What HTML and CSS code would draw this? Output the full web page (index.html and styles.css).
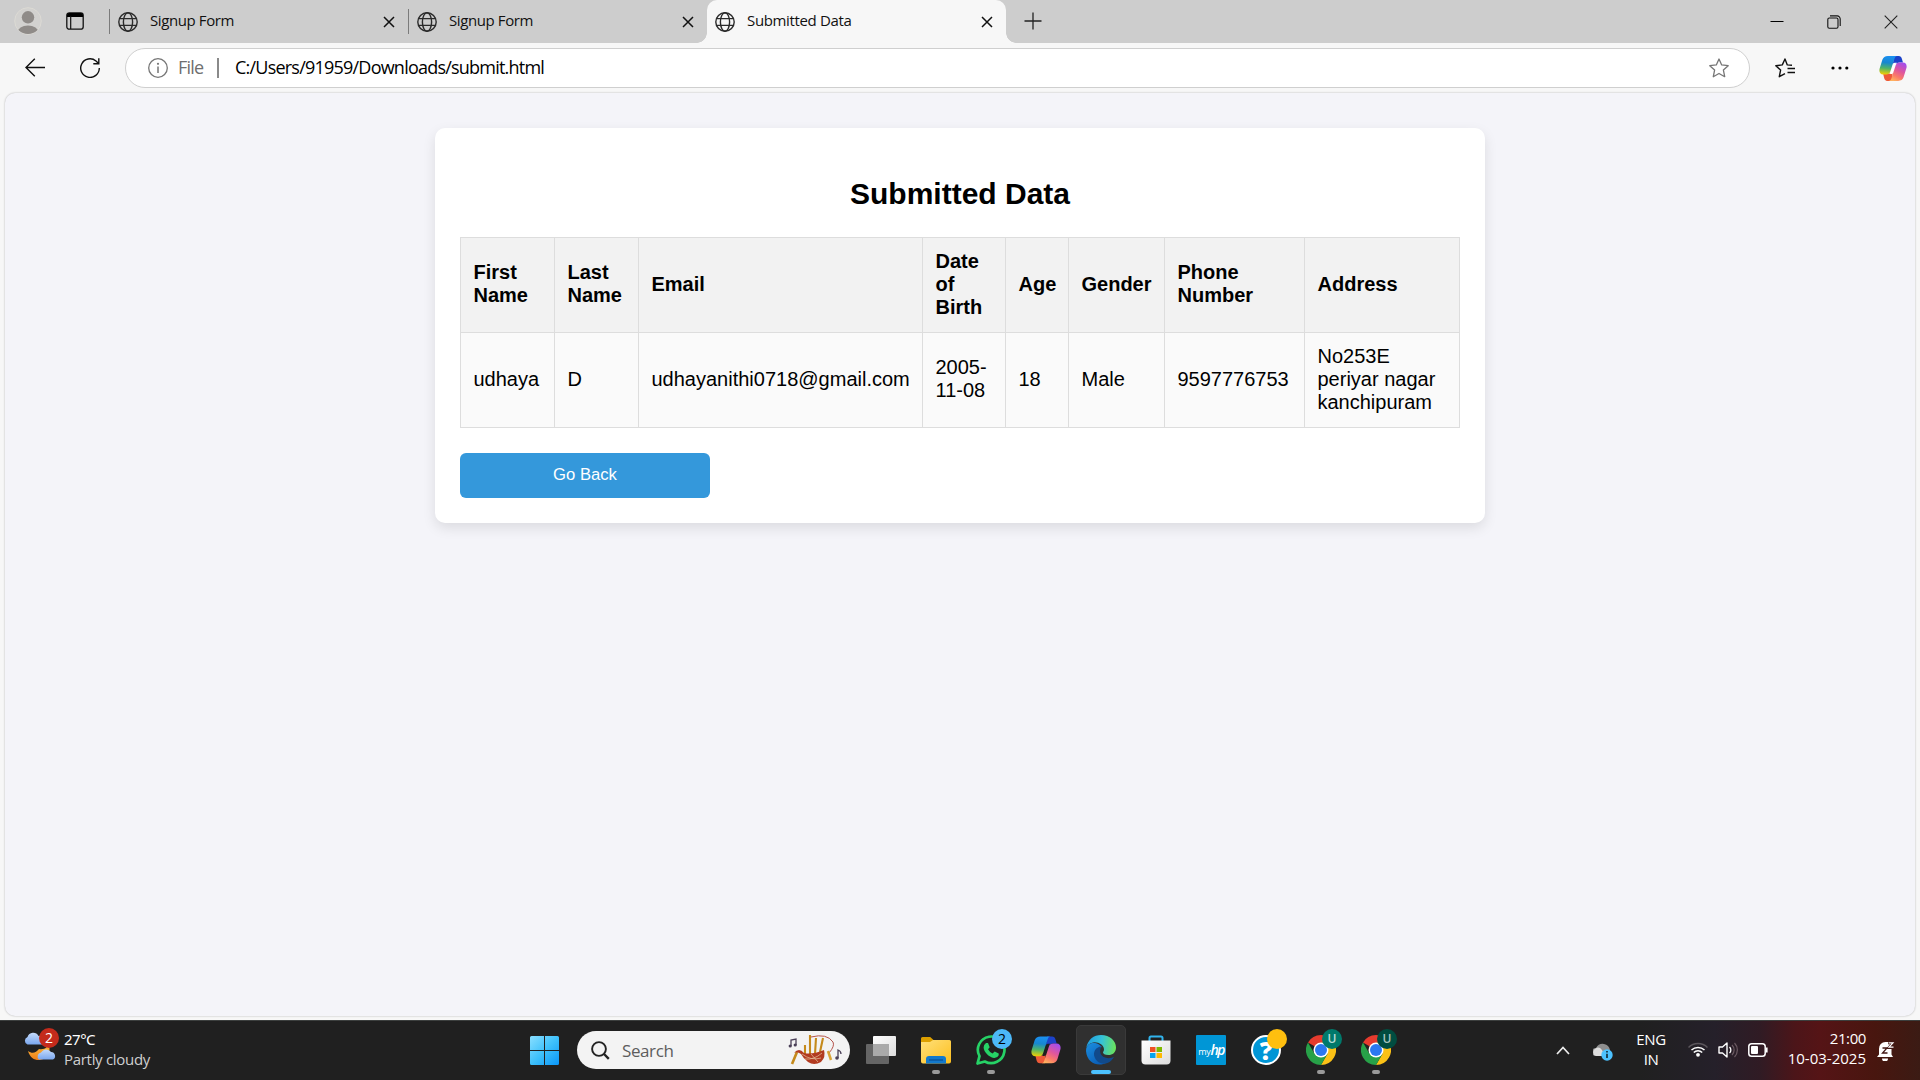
FILE: index.html
```html
<!DOCTYPE html>
<html lang="en">
<head>
<meta charset="utf-8">
<title>Submitted Data</title>
<link rel="stylesheet" href="styles.css">
</head>
<body>
<svg class="defs" width="0" height="0">
  <defs>
    <linearGradient id="cpA" x1="0.3" y1="0" x2="0.2" y2="1"><stop offset="0" stop-color="#1a8ff0"/><stop offset=".35" stop-color="#1787d0"/><stop offset=".65" stop-color="#4db36a"/><stop offset="1" stop-color="#f5d000"/></linearGradient>
    <linearGradient id="cpB" x1="0.8" y1="0" x2="0.3" y2="1"><stop offset="0" stop-color="#a04df0"/><stop offset=".45" stop-color="#e0569c"/><stop offset=".75" stop-color="#fb7a68"/><stop offset="1" stop-color="#ffb15e"/></linearGradient>
    <linearGradient id="edA" x1="0" y1="0.4" x2="1" y2="0.5"><stop offset="0" stop-color="#1f9de0"/><stop offset=".5" stop-color="#35c1d8"/><stop offset="1" stop-color="#6be35a"/></linearGradient>
    <linearGradient id="edB" x1="0" y1="0" x2="0.7" y2="1"><stop offset="0" stop-color="#1b8fe0"/><stop offset="1" stop-color="#0a5cb5"/></linearGradient>
    <linearGradient id="win" x1="0" y1="0" x2="1" y2="1"><stop offset="0" stop-color="#8adfff"/><stop offset=".5" stop-color="#3fc1fb"/><stop offset="1" stop-color="#0a96f8"/></linearGradient>
    <linearGradient id="fold" x1="0" y1="0" x2="1" y2="1"><stop offset="0" stop-color="#ffe07a"/><stop offset="1" stop-color="#fdbf1e"/></linearGradient>
    <linearGradient id="cld" x1="0" y1="0" x2="0" y2="1"><stop offset="0" stop-color="#c3dafb"/><stop offset="1" stop-color="#7aa7ee"/></linearGradient>
    <linearGradient id="moon" x1="0" y1="0" x2="0" y2="1"><stop offset="0" stop-color="#ffc23e"/><stop offset="1" stop-color="#ec7d18"/></linearGradient>
    <linearGradient id="tv" x1="0" y1="0" x2="1" y2="1"><stop offset="0" stop-color="#fff"/><stop offset="1" stop-color="#dcdcdc"/></linearGradient>
    <symbol id="globe" viewBox="0 0 20 20"><g fill="none" stroke="#2b2b2b" stroke-width="1.4"><circle cx="10" cy="10" r="9.2"/><ellipse cx="10" cy="10" rx="4.6" ry="9.2"/><path d="M1.6 6.6h16.8M1.6 13.4h16.8"/></g></symbol>
    <symbol id="close" viewBox="0 0 12 12"><path d="M1 1l10 10M11 1L1 11" stroke="#111" stroke-width="1.5" fill="none"/></symbol>
    <symbol id="copilot" viewBox="0 0 30 28">
      <path d="M16 0.500h5.200c1.800 0 2.800 1.300 3.200 2.800l1.300 4.200h-3.700c-2 0-3.300 .8-4.200 1.500l-2.800-.5z" fill="#1c42c9"/>
      <path d="M14 27.300H8.800c-1.800 0-2.800-1.300-3.200-2.800L4.500 20h3c2.500 0 3.500-.5 4.200-1.200l2.800.5z" fill="#ee5a38"/>
      <path d="M9.500 0.500H19.500c-1.500 0-2.400 1.200-2.900 3L12 17.500c-.7 2-2 2.800-4.200 2.800H4.300C1.200 20.300-.3 17.500.7 14L3.600 4.600C4.500 1.800 6.500.5 9.500.5z" fill="url(#cpA)"/>
      <path d="M20.500 27.300H10.500c1.500 0 2.400-1.200 2.900-3L18 10.300c.7-2 2-2.800 4.200-2.800h3.500c3.100 0 4.600 2.800 3.600 6.300l-2.900 9.400c-.9 2.800-2.900 4.100-5.900 4.100z" fill="url(#cpB)"/>
      <path class="slit" d="M15.400 8.800q.4-1 1.600-1h2.200q-1.500.8-2 2.600L14.400 19q-.3 1-1.400 1h-2.200q1.500-.8 2-2.600z"/>
    </symbol>
    <symbol id="chrome" viewBox="0 0 30 30">
      <path d="M15 0A15 15 0 0 1 28 7.500H15V15L2 7.500A15 15 0 0 1 15 0z" fill="#e63b2e"/>
      <path d="M28 7.500A15 15 0 0 1 15 30L21.500 18.700 15 7.500z" fill="#fbc116"/>
      <path d="M2 7.500A15 15 0 0 0 15 30L21.500 18.700 15 15 8.500 18.700z" fill="#27a148"/>
      <circle cx="15" cy="15" r="7.500" fill="#fff"/><circle cx="15" cy="15" r="6" fill="#2b78f0"/>
    </symbol>
  </defs>
</svg>
<div class="screen">
  <header class="tabstrip">
    <div class="tabtools">
      <svg class="avatar" viewBox="0 0 28 28" width="28" height="28"><defs><clipPath id="av"><circle cx="14" cy="14" r="13"/></clipPath></defs><circle cx="14" cy="14" r="13.300" fill="#d2d1cf" stroke="#dcdad4" stroke-width="1"/><g clip-path="url(#av)" fill="#8f8b88"><circle cx="14" cy="10.300" r="6.200"/><ellipse cx="14" cy="25.500" rx="10.500" ry="7"/></g></svg>
      <svg viewBox="0 0 18 18" width="18" height="18"><rect x=".8" y=".8" width="16.400" height="16.400" rx="2.500" fill="none" stroke="#111" stroke-width="1.300"/><path d="M1 5V3a2 2 0 0 1 2-2h12a2 2 0 0 1 2 2v2z" fill="#000"/><path d="M4.700 4v13" stroke="#111" stroke-width="1.200"/></svg>
    </div>
    <div class="tab"><svg class="globe"><use href="#globe"/></svg><span class="tabname">Signup Form</span><svg class="x"><use href="#close"/></svg></div>
    <div class="tab"><svg class="globe"><use href="#globe"/></svg><span class="tabname">Signup Form</span><svg class="x"><use href="#close"/></svg></div>
    <div class="tab active"><svg class="globe"><use href="#globe"/></svg><span class="tabname">Submitted Data</span><svg class="x"><use href="#close"/></svg></div>
    <svg class="plus" viewBox="0 0 18 18" width="18" height="18"><path d="M9 .5v17M.5 9h17" stroke="#222" stroke-width="1.300"/></svg>
    <div class="winbtns">
      <svg viewBox="0 0 14 14" width="14" height="14"><path d="M.5 6.500h13" stroke="#000" stroke-width="1"/></svg>
      <svg viewBox="0 0 14 14" width="14" height="14"><g fill="none" stroke="#111" stroke-width="1.100"><rect x=".8" y="3" width="10.200" height="10.200" rx="1.500"/><path d="M3 .9h7.200a3 3 0 0 1 3 3V11"/></g></svg>
      <svg viewBox="0 0 14 14" width="14" height="14"><path d="M.7.700l12.600 12.600M13.300.700L.7 13.300" stroke="#222" stroke-width="1.100"/></svg>
    </div>
  </header>
  <nav class="toolbar">
    <svg class="back" viewBox="0 0 20 19" width="20" height="19"><path d="M20 9.500H1M9.800.800L1 9.500l8.800 8.700" fill="none" stroke="#111" stroke-width="1.400"/></svg>
    <svg class="reload" viewBox="0 0 20 20" width="20" height="20"><path d="M19.300 10A9.300 9.300 0 1 1 16 3l2.600 2.600M18.800.300v5.500h-5.500" fill="none" stroke="#111" stroke-width="1.400"/></svg>
    <div class="address">
      <svg viewBox="0 0 20 20" width="20" height="20"><circle cx="10" cy="10" r="9.300" fill="none" stroke="#767676" stroke-width="1.300"/><path d="M10 8.500V15" stroke="#767676" stroke-width="1.500"/><circle cx="10" cy="5.800" r="1.100" fill="#767676"/></svg>
      <span class="scheme">File</span><span class="bar"></span><span class="url">C:/Users/91959/Downloads/submit.html</span>
      <svg class="star" viewBox="0 0 20 20" width="20" height="20"><path d="M10 1l2.700 5.900 6.500.8-4.800 4.400 1.300 6.600L10 15.500l-5.700 3.200 1.300-6.600L.8 7.700l6.500-.8z" fill="none" stroke="#767676" stroke-width="1.300" stroke-linejoin="round"/></svg>
    </div>
    <svg class="favs" viewBox="0 0 20 20" width="20" height="20"><path d="M17 7.200l-4.700-.3L10 1 7.300 6.900.8 7.700l4.800 4.400-1.300 6.600L10 15.600M12.500 10.500h7.500M12.500 14.500h7.500" fill="none" stroke="#111" stroke-width="1.400" stroke-linejoin="round"/></svg>
    <svg class="dots" viewBox="0 0 18 4" width="18" height="4"><circle cx="2" cy="2" r="1.600"/><circle cx="9" cy="2" r="1.600"/><circle cx="15.800" cy="2" r="1.600"/></svg>
    <svg class="cp" width="28" height="27"><use href="#copilot"/></svg>
  </nav>
  <main class="page">
    <section class="card">
      <h2>Submitted Data</h2>
      <table>
        <colgroup><col class="c1"><col class="c2"><col class="c3"><col class="c4"><col class="c5"><col class="c6"><col class="c7"><col class="c8"></colgroup>
        <tr><th>First Name</th><th>Last Name</th><th>Email</th><th>Date of Birth</th><th>Age</th><th>Gender</th><th>Phone Number</th><th>Address</th></tr>
        <tr><td>udhaya</td><td>D</td><td>udhayanithi0718@gmail.com</td><td>2005-11-08</td><td>18</td><td>Male</td><td>9597776753</td><td>No253E periyar nagar kanchipuram</td></tr>
      </table>
      <button class="goback">Go Back</button>
    </section>
  </main>
  <footer class="taskbar">
    <div class="weather">
      <svg viewBox="0 0 36 36" width="36" height="36">
        <path d="M19 17c6 1 9-2 9-6 4 8 0 16-8 17-5 .6-10-2-12-9 4 3 8 2 11-2z" fill="url(#moon)" transform="translate(-4 3)"/>
        <path d="M4 16.500a4 4 0 0 1 0-7.500 6 6 0 0 1 11-1 4 4 0 0 1 4 8.500z" fill="url(#cld)" transform="translate(-.5 -1)"/>
        <path d="M16 33a4 4 0 0 1 2-7 6 6 0 0 1 10-.5 4 4 0 0 1 2 7.500z" fill="url(#cld)" transform="translate(-1 -2.500)"/>
      </svg>
      <span class="count">2</span>
      <div class="wtext"><span class="temp">27°C</span><span class="cond">Partly cloudy</span></div>
    </div>
    <div class="apps">
      <svg class="start" viewBox="0 0 29 29" width="29" height="29"><path d="M1.500 0H14v14H0V1.500A1.500 1.500 0 0 1 1.500 0zM15 0h12.500A1.500 1.500 0 0 1 29 1.500V14H15zM0 15h14v14H1.500A1.500 1.500 0 0 1 0 27.500zM15 15h14v12.500a1.500 1.500 0 0 1-1.500 1.500H15z" fill="url(#win)"/></svg>
      <div class="search">
        <svg viewBox="0 0 19 19" width="19" height="19"><circle cx="8" cy="8" r="6.900" fill="none" stroke="#222" stroke-width="1.900"/><path d="M13 13l4.800 4.800" stroke="#222" stroke-width="2.400"/></svg>
        <span>Search</span>
        <svg class="pipes" viewBox="0 0 56 32" width="56" height="32">
          <g fill="none" stroke="#4b4058" stroke-width="1.300"><path d="M4 12V6l5-1v6"/><path d="M51 24v-8q3 1 3 4"/></g><g fill="#4b4058"><circle cx="3.200" cy="12" r="1.600"/><circle cx="8.200" cy="11" r="1.600"/><circle cx="50" cy="24" r="1.800"/></g>
          <path d="M24 3Q40-1 46 8 48 12 42 19" fill="none" stroke="#b5534b" stroke-width="1"/>
          <path d="M10 18l-5 12" stroke="#c58a1b" stroke-width="2.600"/><path d="M23 22V1M18 20v-9M28 20l1-16M33 18l3-14" stroke="#c58a1b" stroke-width="2.100"/><path d="M41 17l3 9" stroke="#d9a436" stroke-width="2.500"/>
          <path d="M7 19q5-6 10 0 8 2 20-3 2 7-3 12-7 4-13 0-5-4-7-8-4-3-7-1z" fill="#b23b20"/><path d="M15 20q9 7 19 4M18 25q9 1 17-6M24 20l7 8" fill="none" stroke="#e8c6a0" stroke-width=".7"/>
        </svg>
      </div>
      <div class="slot"><svg viewBox="0 0 30 30" width="30" height="30"><rect x="7" y="1" width="23" height="20" rx="1" fill="url(#tv)"/><rect x="0" y="9" width="23" height="20" rx="1" fill="#777" opacity=".8"/><path d="M7 9h16v12H7z" fill="#aaa"/></svg></div>
      <div class="slot run"><svg viewBox="0 0 30 30" width="30" height="30"><path d="M0 3.500A1.500 1.500 0 0 1 1.500 2h7.700L12.500 5v4H0z" fill="#dda000"/><path d="M0 7h9l3-2h16.500A1.500 1.500 0 0 1 30 6.500v20a2 2 0 0 1-2 2H2a2 2 0 0 1-2-2z" fill="url(#fold)"/><path d="M5 28.500V24a3 3 0 0 1 3-3h14a3 3 0 0 1 3 3v4.500z" fill="#1379cc"/><path d="M8 25h14" stroke="#0b57a0" stroke-width="1.500"/></svg></div>
      <div class="slot run"><svg viewBox="0 0 30 30" width="30" height="30"><path d="M1.500 28.500l2-7.300A13.300 13.300 0 1 1 8.800 26.500z" fill="none" stroke="#26d266" stroke-width="2.700" stroke-linejoin="round"/><path d="M10 8l2 0 1.700 4.200-1.700 2q1.500 2.800 4.500 4.200l2.200-2 4 2v1.800q-1.300 3-4.700 2.800C12.500 22 8 17 7.600 12.500Q7.600 9.500 10 8z" fill="#26d266"/></svg><span class="badge blue">2</span></div>
      <div class="slot oncopilot"><svg width="30" height="28"><use href="#copilot"/></svg></div>
      <div class="slot current"><svg viewBox="0 0 30 30" width="30" height="30"><path d="M.3 13C1.500 4.500 8 0 15 0c9 0 15 6 15 12.500 0 5-3.500 7.500-7.500 7.500-3.800 0-5.500-1.500-5.500-2.500 0-.8 1-1.300 1-3.300C18 10 12 6.500 7 7.500 4 8 1.500 10 .3 13z" fill="url(#edA)"/><path d="M.2 13.500C2 8.500 6.500 6.500 11 8.500c3 1.300 5 3.500 5 3.500-3 0-5.500 3-5.500 7 0 4 3.500 9 10 8.500C14 32 1 29.500 0 16z" fill="url(#edB)"/><path d="M14 11.500c-6 2-7.500 7.500-4.500 12.500 2.500 4.500 8 5.500 12 4 3-1.200 5-3.500 6.500-6-5 2.500-13 1-13.800-5-.2-2.500.6-4 .8-5.500z" fill="#114a8b"/></svg></div>
      <div class="slot"><svg viewBox="0 0 30 30" width="30" height="30"><path d="M8.500 7V3a1.500 1.500 0 0 1 1.500-1.500h10A1.500 1.500 0 0 1 21.500 3v4" fill="none" stroke="#31b4ed" stroke-width="2"/><path d="M.5 5.500h29v20a4 4 0 0 1-4 4h-21a4 4 0 0 1-4-4z" fill="url(#tv)"/><path d="M9 12h5.500v5H9z" fill="#f05023"/><path d="M15.500 12H21v5h-5.500z" fill="#7fba00"/><path d="M9 18h5.500v5H9z" fill="#06a4ef"/><path d="M15.500 18H21v5h-5.500z" fill="#ffb901"/></svg></div>
      <div class="slot"><div class="myhp">my<b>hp</b></div></div>
      <div class="slot"><div class="help">?</div><span class="badge yellow"></span></div>
      <div class="slot run"><svg width="30" height="30"><use href="#chrome"/></svg><span class="badge teal">U</span></div>
      <div class="slot run"><svg width="30" height="30"><use href="#chrome"/></svg><span class="badge dark">U</span></div>
    </div>
    <div class="tray">
      <svg class="chev" viewBox="0 0 14 9" width="14" height="9"><path d="M1 8l6-6.500L13 8" fill="none" stroke="#eee" stroke-width="1.700"/></svg>
      <svg class="cloud" viewBox="0 0 20 18" width="20" height="18"><path d="M3 13a4 4 0 0 1 0-8Q6 0 11 1t6 6l-3 6z" fill="#8e8e8e"/><path d="M3 13a4 4 0 0 1-.5-7.500Q6 3 9 7l3 6z" fill="#ddd"/><circle cx="14" cy="12" r="5.700" fill="#4cc2ff"/><path d="M14 10.800V15M14 8v1.500" stroke="#12303f" stroke-width="1.700"/></svg>
      <div class="lang"><span>ENG</span><span>IN</span></div>
      <svg class="wifi" viewBox="0 0 20 16" width="20" height="16"><g fill="none" stroke-width="1.500"><path d="M.5 6.500a13.400 13.400 0 0 1 19 0" stroke="#5b565c"/><path d="M3.500 9a9.500 9.500 0 0 1 13 0M5.800 11.500a6 6 0 0 1 8.400 0" stroke="#fff"/></g><circle cx="10" cy="13.800" r="1.900" fill="#fff"/></svg>
      <svg class="vol" viewBox="0 0 20 18" width="20" height="18"><path d="M1 6h3.500L9 2v14l-4.500-4H1z" fill="none" stroke="#fff" stroke-width="1.400" stroke-linejoin="round"/><path d="M11.500 6a4 4 0 0 1 0 6" fill="none" stroke="#fff" stroke-width="1.300"/><path d="M14 4a7 7 0 0 1 0 10M16.500 2a10 10 0 0 1 0 14" fill="none" stroke="#6b5a62" stroke-width="1.200"/></svg>
      <svg class="bat" viewBox="0 0 20 14" width="20" height="14"><rect x=".8" y=".8" width="16.400" height="12.400" rx="2.800" fill="none" stroke="#fff" stroke-width="1.500"/><rect x="3" y="3" width="7" height="8" rx="1" fill="#fff"/><path d="M18.700 4.500v5" stroke="#fff" stroke-width="1.800"/></svg>
      <div class="clock"><span class="time">21:00</span><span class="date">10-03-2025</span></div>
      <svg class="bell" viewBox="0 0 18 20" width="18" height="20"><path d="M2 13.500V8a6.500 6.500 0 0 1 6.500-7H13v5l1.500 2v5.500l1.500 2.500H0z" fill="#fff"/><path d="M5 17.500h6a3 3 0 0 1-6 0z" fill="#fff"/><path d="M5.500 7h4.500L5.500 12H10.500" fill="none" stroke="#421715" stroke-width="1.300"/><path d="M11 1.800h5L12 6.500H16.500" fill="none" stroke="#421715" stroke-width="2.800"/><path d="M11.500 1.800H16L12 6.200H16.500" fill="none" stroke="#fff" stroke-width="1.200"/></svg>
    </div>
  </footer>
</div>
</body>
</html>
```
FILE: styles.css
```css
* { box-sizing: border-box; }
body { margin: 0; font-family: "Open Sans", "Noto Sans", sans-serif; color: #111; }
svg { display: block; flex: none; }
.defs { position: absolute; }
.slit { fill: var(--slit, #fff); }
.screen { width: 1920px; height: 1080px; display: flex; flex-direction: column; overflow: hidden; background: #f7f7f7; white-space: nowrap; }

.tabstrip { height: 43px; flex: none; background: #cdcdcd; display: flex; }
.tabtools { width: 109px; display: flex; align-items: center; gap: 24px; padding: 0 0 1px 14px; }
.tab { width: 299px; display: flex; align-items: center; padding: 1px 12px 0 8px; position: relative; }
.tab:not(.active)::before { content: ""; position: absolute; left: 0; top: 9px; width: 1px; height: 25px; background: #7b7b7b; }
.tab .globe { width: 20px; height: 20px; margin-left: 1px; }
.tab .x { width: 12px; height: 12px; margin-left: auto; margin-right: 1px; }
.tabname { font-size: 15px; letter-spacing: -0.4px; margin-left: 12px; line-height: 20px; margin-top: -5px; }
.tab.active { background: #f7f7f7; border-radius: 10px 10px 0 0; padding-left: 7px; }
.tab.active .tabname { letter-spacing: -0.35px; }
.tab.active::before, .tab.active::after { content: ""; position: absolute; bottom: 0; width: 10px; height: 10px; }
.tab.active::before { left: -10px; background: radial-gradient(circle at 0 0, transparent 9.5px, #f7f7f7 10px); }
.tab.active::after { right: -10px; background: radial-gradient(circle at 100% 0, transparent 9.5px, #f7f7f7 10px); }
.plus { margin: 12px 0 0 18px; }
.winbtns { display: flex; align-items: center; gap: 43px; margin-left: auto; padding: 0 22px 0 0; }

.toolbar { height: 49px; flex: none; display: flex; align-items: center; }
.back { margin-left: 25px; }
.reload { margin-left: 35px; }
.address { width: 1625px; height: 40px; margin-left: 25px; background: #fff; border: 1px solid #cfcfcf; border-radius: 20px; display: flex; align-items: center; padding: 0 20px 0 22px; }
.scheme { font-size: 18px; color: #6f6f6f; margin: -2px 0 0 10px; width: 39px; letter-spacing: -0.8px; }
.bar { width: 2px; height: 20px; background: #8a8a8a; margin-right: 16px; }
.url { font-size: 18px; color: #000; letter-spacing: -0.78px; margin-top: -2px; }
.star { margin-left: auto; }
.favs { margin-left: 25px; }
.dots { margin-left: 36px; }
.cp { margin: 2px 0 0 30px; }

.page { flex: 1; margin: 1px 5px 4px; background: #f4f4f9; border-radius: 10px; box-shadow: 0 0 2px rgba(0,0,0,.3); padding-top: 35px; white-space: normal; font-family: "Liberation Sans", Arial, sans-serif; font-size: 20px; line-height: 23px; color: #000; }
.card { width: 1050px; height: 395px; margin: 0 auto; padding: 25px; background: #fff; border-radius: 10px; box-shadow: 0 5px 12.5px rgba(0,0,0,.1); }
.card h2 { margin: 24px 0 25px; padding-bottom: 1px; font-size: 30px; line-height: 34px; text-align: center; }
table { width: 1000px; table-layout: fixed; border-collapse: collapse; }
th, td { border: 1px solid #ddd; padding: 11.5px 12px 13.5px 12.5px; text-align: left; height: 95px; }
th { background: #f2f2f2; }
td { background: #fafafa; }
.c1 { width: 94px; } .c2 { width: 84px; } .c3 { width: 284px; } .c4 { width: 83px; }
.c5 { width: 63px; } .c6 { width: 96px; } .c7 { width: 140px; } .c8 { width: 155px; }
.goback { display: block; width: 250px; height: 45px; margin-top: 25px; border: 0; border-radius: 6px; background: #3498db; color: #fff; font: 16.667px "Liberation Sans", Arial, sans-serif; padding: 0 0 2px; }

.taskbar { height: 60px; flex: none; display: flex; border-top: 1px solid #3c3f3e; color: #fff; background: linear-gradient(90deg, #202020 0, #202020 1640px, #25202a 1715px, #301b24 1760px, #4c1519 1795px, #551416 1820px, #48160f 1875px, #3b1b14 1920px); }
.weather { width: 530px; display: flex; padding: 8px 0 0 24px; position: relative; }
.count { position: absolute; left: 39px; top: 7px; width: 20px; height: 20px; border-radius: 50%; background: #c42b1c; font-size: 14px; line-height: 20px; text-align: center; }
.wtext { display: flex; flex-direction: column; margin-left: 4px; font-size: 15px; line-height: 20px; }
.temp { letter-spacing: -0.5px; font-family: "Noto Sans", sans-serif; }
.cond { color: #cfcfcf; letter-spacing: -0.3px; }
.apps { display: flex; align-items: flex-start; }
.start { margin-top: 15px; }
.search { width: 273px; height: 38px; margin: 10px 3px 0 18px; background: #f3f3f3; border-radius: 19px; display: flex; align-items: center; padding: 0 7px 0 14px; color: #5d5d5d; font-size: 17px; }
.search span { margin: 0 0 0 12px; letter-spacing: -0.4px; }
.pipes { margin-left: auto; }
.slot { width: 50px; height: 50px; margin: 4px 0 0 5px; display: flex; align-items: center; justify-content: center; position: relative; border-radius: 5px; }
.search + .slot { margin-left: 3px; }
.oncopilot { --slit: #202020; }
.current { background: #303030; border: 1px solid #3a3a3a; }
.run::after, .current::after { content: ""; position: absolute; bottom: 1px; left: 21px; width: 8px; height: 4px; border-radius: 2px; background: #9a9a9a; }
.current::after { left: 14px; bottom: 0; width: 20px; background: #4cc2ff; }
.badge { position: absolute; right: 4px; top: 4px; width: 20px; height: 20px; border-radius: 50%; text-align: center; font-size: 14px; line-height: 20px; }
.blue { background: #4cb8f8; color: #000; }
.yellow { background: #ffbf0f; }
.teal { background: #00796b; color: #b8ddd8; font-size: 12px; font-weight: 600; }
.dark { background: #004d40; color: #a9c4bf; font-size: 12px; font-weight: 600; }
.myhp { width: 30px; height: 30px; background: #0096d6; font-size: 9px; line-height: 29px; text-align: center; letter-spacing: -0.3px; border-radius: 1px; }
.myhp b { font-size: 14px; font-style: italic; font-weight: 600; letter-spacing: -1.5px; }
.help { width: 30px; height: 30px; border-radius: 50%; border: 2px solid #fff; background: #0096d6; font-size: 25px; font-weight: 800; line-height: 26px; text-align: center; }
.tray { margin-left: auto; display: flex; align-items: flex-start; font-size: 15px; line-height: 20px; padding-right: 25px; }
.chev { margin-top: 25px; }
.cloud { margin: 22px 0 0 23px; }
.lang { width: 40px; margin: 8px 0 0 18px; display: flex; flex-direction: column; text-align: center; letter-spacing: -0.4px; }
.wifi { margin: 20px 0 0 17px; }
.vol { margin: 20px 0 0 10px; }
.bat { margin: 22px 0 0 10px; }
.clock { width: 98px; margin-top: 7px; display: flex; flex-direction: column; text-align: right; }
.time { letter-spacing: -0.4px; }
.date { letter-spacing: 0; }
.bell { margin: 20px 0 0 11px; }
```
